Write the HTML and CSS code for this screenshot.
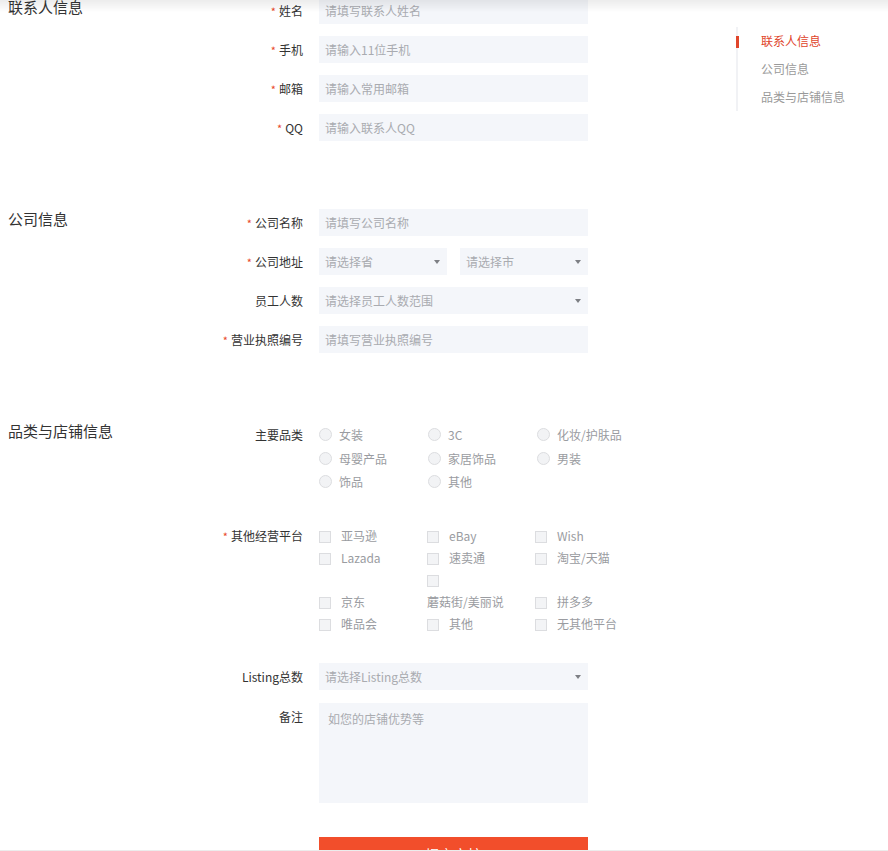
FILE: index.html
```html
<!DOCTYPE html>
<html lang="zh-CN">
<head>
<meta charset="utf-8">
<title>入驻申请</title>
<link rel="stylesheet" href="styles.css">
</head>
<body>
<div class="top-shadow"></div>
<div class="page">
  <div class="form">
    <section class="sec">
      <h2 class="sec-title">联系人信息</h2>
      <div class="fields">
        <div class="row"><label class="lbl"><i class="req">*</i>姓名</label><input class="inp" placeholder="请填写联系人姓名"></div>
        <div class="row"><label class="lbl"><i class="req">*</i>手机</label><input class="inp" placeholder="请输入11位手机"></div>
        <div class="row"><label class="lbl"><i class="req">*</i>邮箱</label><input class="inp" placeholder="请输入常用邮箱"></div>
        <div class="row"><label class="lbl"><i class="req">*</i>QQ</label><input class="inp" placeholder="请输入联系人QQ"></div>
      </div>
    </section>

    <section class="sec">
      <h2 class="sec-title">公司信息</h2>
      <div class="fields">
        <div class="row"><label class="lbl"><i class="req">*</i>公司名称</label><input class="inp" placeholder="请填写公司名称"></div>
        <div class="row"><label class="lbl"><i class="req">*</i>公司地址</label>
          <div class="pair">
            <div class="sel">请选择省<span class="arrow"></span></div>
            <div class="sel">请选择市<span class="arrow"></span></div>
          </div>
        </div>
        <div class="row"><label class="lbl">员工人数</label><div class="sel full">请选择员工人数范围<span class="arrow"></span></div></div>
        <div class="row"><label class="lbl"><i class="req">*</i>营业执照编号</label><input class="inp" placeholder="请填写营业执照编号"></div>
      </div>
    </section>

    <section class="sec">
      <h2 class="sec-title">品类与店铺信息</h2>
      <div class="fields">
        <div class="row row-radio"><label class="lbl lbl-radio">主要品类</label>
          <div class="radios">
            <span class="opt"><span class="radio"></span>女装</span>
            <span class="opt"><span class="radio"></span>3C</span>
            <span class="opt"><span class="radio"></span>化妆/护肤品</span>
            <span class="opt"><span class="radio"></span>母婴产品</span>
            <span class="opt"><span class="radio"></span>家居饰品</span>
            <span class="opt"><span class="radio"></span>男装</span>
            <span class="opt"><span class="radio"></span>饰品</span>
            <span class="opt"><span class="radio"></span>其他</span>
          </div>
        </div>
        <div class="row row-check"><label class="lbl lbl-check"><i class="req">*</i>其他经营平台</label>
          <div class="checks"><span class="chk-item"><span class="box"></span><span class="txt">亚马逊</span></span><span class="chk-item"><span class="box"></span><span class="txt">eBay</span></span><span class="chk-item"><span class="box"></span><span class="txt">Wish</span></span><span class="chk-item"><span class="box"></span><span class="txt">Lazada</span></span><span class="chk-item"><span class="box"></span><span class="txt">速卖通</span></span><span class="chk-item"><span class="box"></span><span class="txt">淘宝/天猫</span></span><span class="chk-item"><span class="box"></span><span class="txt">京东</span></span><span class="chk-item wrap"><span class="box"></span><span class="txt">蘑菇街/美丽说</span></span><span class="chk-item"><span class="box"></span><span class="txt">拼多多</span></span><span class="chk-item"><span class="box"></span><span class="txt">唯品会</span></span><span class="chk-item"><span class="box"></span><span class="txt">其他</span></span><span class="chk-item"><span class="box"></span><span class="txt">无其他平台</span></span></div>
        </div>
        <div class="row row-listing"><label class="lbl">Listing总数</label><div class="sel full">请选择Listing总数<span class="arrow"></span></div></div>
        <div class="row row-note"><label class="lbl">备注</label><textarea class="note" placeholder="如您的店铺优势等"></textarea></div>
        <div class="row"><span class="lbl"></span><button class="submit" type="button">提交审核</button></div>
      </div>
    </section>
  </div>

  <nav class="nav">
    <a class="nav-item active">联系人信息</a>
    <a class="nav-item">公司信息</a>
    <a class="nav-item">品类与店铺信息</a>
  </nav>
</div>
<div class="bottom-line"></div>
</body>
</html>
```

FILE: styles.css
```css
html, body {
  margin: 0;
  padding: 0;
  background: #fff;
  overflow: hidden;
}
body {
  font-family: "Noto Sans CJK SC", "Microsoft YaHei", sans-serif;
  font-size: 12px;
  color: #333;
}
.top-shadow {
  position: fixed;
  left: 0;
  right: 0;
  top: 0;
  height: 12px;
  background: linear-gradient(rgba(0,0,0,0.075), rgba(0,0,0,0.03) 60%, rgba(0,0,0,0));
  pointer-events: none;
  z-index: 5;
}
.bottom-line {
  position: fixed;
  left: 0;
  right: 0;
  bottom: 0;
  height: 1px;
  background: #ececec;
  z-index: 5;
}
.page {
  display: flex;
  align-items: flex-start;
}
.form {
  width: 736px;
  flex: none;
  margin-top: -3px;
}
.sec {
  display: flex;
  align-items: flex-start;
  margin-bottom: 56px;
}
.sec-title {
  width: 208px;
  box-sizing: border-box;
  padding-left: 8px;
  margin: 0;
  font-size: 15px;
  line-height: 20px;
  font-weight: normal;
  color: #333;
  flex: none;
}
.fields {
  display: flex;
  flex-direction: column;
}
.row {
  display: flex;
  align-items: flex-start;
  margin-bottom: 12px;
}
.lbl {
  width: 95px;
  margin-right: 16px;
  text-align: right;
  line-height: 27px;
  min-height: 27px;
  color: #333;
  flex: none;
  white-space: nowrap;
}
.req {
  font-style: normal;
  color: #e8482b;
  margin-right: 3px;
  font-size: 11px;
  line-height: 0;
}
.inp, .sel, .note {
  width: 269px;
  height: 27px;
  box-sizing: border-box;
  background: #f4f6fa;
  border: none;
  outline: none;
  margin: 0;
  padding: 0 6px;
  font-family: inherit;
  font-size: 12px;
  color: #333;
  flex: none;
}
.inp::placeholder, .note::placeholder {
  color: #a9abb0;
}
.sel {
  position: relative;
  line-height: 27px;
  color: #a9abb0;
}
.pair {
  display: flex;
  gap: 13px;
  width: 269px;
}
.pair .sel {
  width: auto;
  flex: 1;
}
.arrow {
  position: absolute;
  right: 7px;
  top: 12px;
  width: 0;
  height: 0;
  border-left: 3px solid transparent;
  border-right: 3px solid transparent;
  border-top: 4px solid #7d7f84;
}
.row-radio {
  margin-bottom: 31px;
  padding-top: 2px;
}
.lbl-radio {
  line-height: 23.5px;
  min-height: 0;
}
.radios {
  display: grid;
  grid-template-columns: 109px 109px 109px;
  grid-auto-rows: 23.5px;
  color: #9a9ca1;
}
.opt {
  display: flex;
  align-items: center;
  white-space: nowrap;
}
.radio {
  width: 13px;
  height: 13px;
  box-sizing: border-box;
  border-radius: 50%;
  border: 1px solid #dcdde0;
  background: #f2f3f5;
  margin-right: 7px;
  flex: none;
}
.row-check {
  margin-bottom: 28px;
}
.lbl-check {
  line-height: 22px;
  min-height: 0;
}
.checks {
  width: 324px;
  line-height: 22px;
  color: #9a9ca1;
}
.chk-item {
  display: inline-block;
  width: 95px;
  margin-right: 13px;
  vertical-align: baseline;
  white-space: nowrap;
}
.box {
  display: inline-block;
  width: 12px;
  height: 12px;
  box-sizing: border-box;
  border: 1px solid #dcdde0;
  background: #f3f4f6;
  margin-right: 10px;
  vertical-align: -2px;
}
.chk-item.wrap .txt {
  display: block;
}
.row-listing {
  margin-bottom: 13px;
}
.note {
  height: 100px;
  padding: 7px 9px;
  line-height: 18px;
  resize: none;
}
.row-note {
  margin-bottom: 34px;
}
.submit {
  width: 269px;
  height: 34px;
  border: none;
  margin: 0;
  padding: 0;
  background: #f24e2b;
  color: #fff;
  font-family: inherit;
  font-size: 14px;
  line-height: 34px;
}
.nav {
  margin-top: 27px;
  border-left: 2px solid #f1f2f5;
  display: flex;
  flex-direction: column;
}
.nav-item {
  position: relative;
  display: block;
  padding-left: 23px;
  line-height: 28px;
  color: #9a9a9a;
  white-space: nowrap;
}
.nav-item.active {
  color: #e0452b;
}
.nav-item.active::before {
  content: "";
  position: absolute;
  left: -2px;
  top: 9px;
  width: 3px;
  height: 12px;
  background: #e0452b;
}
```
